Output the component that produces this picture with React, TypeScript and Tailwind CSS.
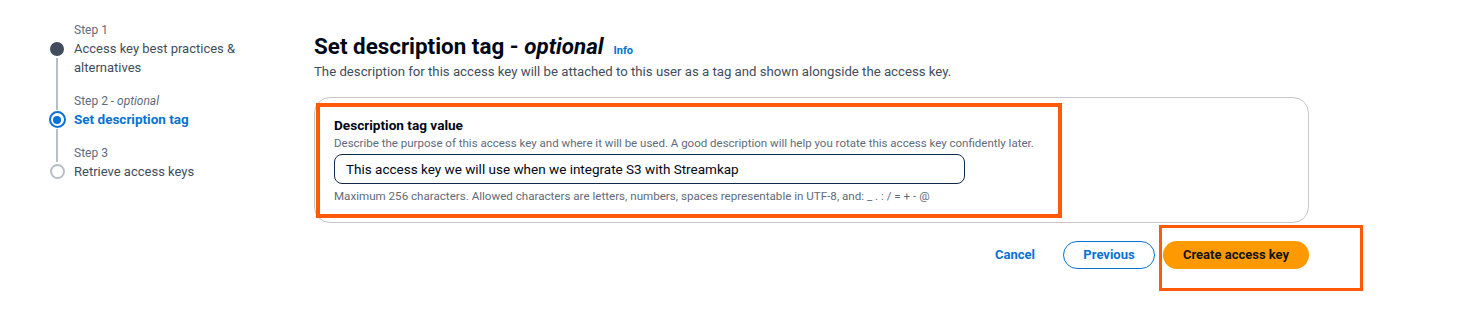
import React from 'react';

const font = { fontFamily: 'Roboto, "Open Sans", sans-serif' };

type Step = { label: string; optional?: boolean; title: string; state: 'done' | 'current' | 'todo' };

const steps: Step[] = [
  { label: 'Step 1', title: 'Access key best practices & alternatives', state: 'done' },
  { label: 'Step 2', optional: true, title: 'Set description tag', state: 'current' },
  { label: 'Step 3', title: 'Retrieve access keys', state: 'todo' },
];

const Dot: React.FC<{ state: Step['state'] }> = ({ state }) => {
  if (state === 'done') return <div className="h-[14px] w-[14px] rounded-full bg-[#414d5c]" />;
  if (state === 'current')
    return (
      <div className="flex h-[17px] w-[17px] items-center justify-center rounded-full border-[2.5px] border-[#0972d3]">
        <div className="h-[8px] w-[8px] rounded-full bg-[#0972d3]" />
      </div>
    );
  return <div className="h-[15px] w-[15px] rounded-full border-2 border-[#b6bec9] bg-white" />;
};

const Stepper: React.FC = () => (
  <nav className="w-[314px] shrink-0 pl-[48px] pt-[21px]">
    {steps.map((s, i) => (
      <div key={s.label} className="flex">
        <div className="flex w-[18px] flex-col items-center">
          <div className="flex h-[18px] justify-center">
            {i > 0 && <div className="w-[2px] bg-[#b6bec9]" />}
          </div>
          <div className="flex h-[19px] items-center justify-center">
            <Dot state={s.state} />
          </div>
          {i < steps.length - 1 && <div className="w-[2px] flex-1 bg-[#b6bec9]" />}
        </div>
        <div className={`ml-[8px] ${i < steps.length - 1 ? 'pb-[15px]' : ''}`}>
          <div className="h-[18px] text-[12px] leading-[18px] text-[#5f6b7a]">
            {s.label}
            {s.optional && <span className="italic"> - optional</span>}
          </div>
          <div
            className={`w-[175px] leading-[19px] ${
              s.state === 'current' ? 'text-[13.5px] font-bold text-[#0972d3]' : 'text-[13px] text-[#414d5c]'
            }`}
          >
            {s.title}
          </div>
        </div>
      </div>
    ))}
  </nav>
);

export default function App() {
  return (
    <div className="relative h-[327px] w-[1462px] overflow-hidden bg-white" style={font}>
      <div className="flex">
        <Stepper />
        <main className="w-[995px] pt-[32px]">
          <div className="flex items-baseline">
            <h1 className="text-[22.4px] font-bold leading-[28px] text-[#000716]">
              Set description tag - <span className="italic">optional</span>
            </h1>
            <span className="ml-[10px] text-[11px] font-bold text-[#0972d3]">Info</span>
          </div>
          <p className="mt-[3px] text-[13.2px] leading-[18px] text-[#414d5c]">
            The description for this access key will be attached to this user as a tag and shown alongside the access key.
          </p>

          <section className="mt-[16px] h-[126px] rounded-[16px] border border-[#c6c6cd] px-[19px] pt-[18px]">
            <div className="text-[13.6px] font-bold leading-[18px] text-[#000716]">Description tag value</div>
            <div className="mt-[1px] text-[11.5px] leading-[16px] text-[#5f6b7a]">
              Describe the purpose of this access key and where it will be used. A good description will help you rotate this access key confidently later.
            </div>
            <input
              readOnly
              value="This access key we will use when we integrate S3 with Streamkap"
              className="mt-[3px] h-[30px] w-[631px] rounded-[8px] border border-[#0f2a4a] px-[11px] text-[13.5px] text-[#000716] outline-none"
              style={font}
            />
            <div className="mt-[4px] text-[11.6px] leading-[16px] text-[#5f6b7a]">
              Maximum 256 characters. Allowed characters are letters, numbers, spaces representable in UTF-8, and: _ . : / = + - @
            </div>
          </section>

          <div className="mt-[18px] flex items-center justify-end">
            <button className="mr-[28px] text-[13px] font-bold text-[#0972d3]">Cancel</button>
            <button className="mr-[8px] h-[28px] w-[92px] rounded-full border border-[#0972d3] text-[13px] font-bold text-[#0972d3]">
              Previous
            </button>
            <button className="h-[28px] w-[146px] rounded-full bg-[#ff9900] text-[13px] font-bold text-[#0f141a]">
              Create access key
            </button>
          </div>
        </main>
      </div>

      {/* annotation boxes drawn over the screenshot */}
      <div className="pointer-events-none absolute left-[316px] top-[103px] h-[115px] w-[746px] border-[4px] border-[#ff5a0a]" />
      <div className="pointer-events-none absolute left-[1159px] top-[225px] h-[66px] w-[204px] border-[3.5px] border-[#ff5a0a]" />
    </div>
  );
}
